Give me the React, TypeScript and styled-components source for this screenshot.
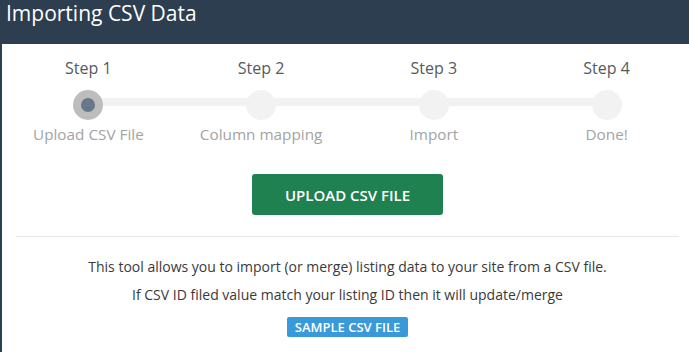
import React from "react";
import styled, { createGlobalStyle } from "styled-components";

const Global = createGlobalStyle`
  html, body { margin: 0; padding: 0; background: #ffffff; overflow: hidden; }
  body { font-family: "Open Sans", "Liberation Sans", sans-serif; }
`;

const Card = styled.div`
  width: 693px;
  height: 352px;
  background: #2c3e50;
  display: flex;
  flex-direction: column;
`;

const Header = styled.h1`
  margin: 0;
  height: 44px;
  padding: 1px 0 0 6px;
  box-sizing: border-box;
  color: #ffffff;
  font-family: "Open Sans", "Liberation Sans", sans-serif;
  font-weight: 400;
  font-size: 21px;
  line-height: 24px;
`;

const Body = styled.div`
  flex: 1;
  margin-left: 2px;
  background: #ffffff;
  padding-top: 12px;
  display: flex;
  flex-direction: column;
  align-items: center;
`;

const Stepper = styled.div`
  width: 100%;
  display: grid;
  grid-template-columns: repeat(4, 1fr);
`;

const Step = styled.div`
  display: flex;
  flex-direction: column;
  align-items: center;
`;

const StepTitle = styled.div`
  font-size: 16px;
  line-height: 24px;
  color: #555a60;
`;

const DotRow = styled.div<{ $last: boolean }>`
  position: relative;
  width: 100%;
  height: 30px;
  margin-top: 10px;
  display: flex;
  justify-content: center;
  &::before {
    content: "";
    display: ${(p) => (p.$last ? "none" : "block")};
    position: absolute;
    left: 50%;
    width: 100%;
    top: 8px;
    height: 8px;
    background: #f2f2f2;
  }
`;

const Dot = styled.div<{ $active: boolean }>`
  position: relative;
  z-index: 1;
  width: 30px;
  height: 30px;
  border-radius: 50%;
  background: ${(p) => (p.$active ? "#bdbdbd" : "#f2f2f2")};
  display: flex;
  align-items: center;
  justify-content: center;
`;

const DotCore = styled.div`
  width: 14px;
  height: 14px;
  border-radius: 50%;
  background: #67788a;
`;

const StepLabel = styled.div`
  margin-top: 4px;
  font-size: 15.3px;
  line-height: 20px;
  color: #a3a3a3;
`;

const UploadButton = styled.button`
  margin-top: 30px;
  width: 191px;
  height: 41px;
  border: none;
  border-radius: 3px;
  background: #1f8050;
  color: #ffffff;
  font-family: "Open Sans", "Liberation Sans", sans-serif;
  font-weight: 600;
  font-size: 15px;
  cursor: pointer;
`;

const Divider = styled.hr`
  align-self: stretch;
  margin: 21px 14px 0 14px;
  border: none;
  border-top: 1px solid #e8e8e8;
`;

const Note = styled.p<{ $gap: number }>`
  margin: ${(p) => p.$gap}px 0 0 0;
  font-size: 14px;
  line-height: 20px;
  color: #3a3a3a;
`;

const SampleButton = styled.button`
  margin-top: 12px;
  width: 121px;
  height: 20px;
  padding: 0;
  border: none;
  border-radius: 2px;
  background: #3a9ad9;
  color: #ffffff;
  font-family: "Open Sans", "Liberation Sans", sans-serif;
  font-weight: 600;
  font-size: 13px;
  line-height: 20px;
  cursor: pointer;
`;

const steps = [
  { title: "Step 1", label: "Upload CSV File" },
  { title: "Step 2", label: "Column mapping" },
  { title: "Step 3", label: "Import" },
  { title: "Step 4", label: "Done!" },
];

export default function App() {
  return (
    <>
      <Global />
      <Card>
        <Header>Importing CSV Data</Header>
        <Body>
          <Stepper>
            {steps.map((s, i) => (
              <Step key={s.title}>
                <StepTitle>{s.title}</StepTitle>
                <DotRow $last={i === steps.length - 1}>
                  <Dot $active={i === 0}>{i === 0 && <DotCore />}</Dot>
                </DotRow>
                <StepLabel>{s.label}</StepLabel>
              </Step>
            ))}
          </Stepper>
          <UploadButton>UPLOAD CSV FILE</UploadButton>
          <Divider />
          <Note $gap={20}>
            This tool allows you to import (or merge) listing data to your site from a CSV file.
          </Note>
          <Note $gap={8}>
            If CSV ID filed value match your listing ID then it will update/merge
          </Note>
          <SampleButton>SAMPLE CSV FILE</SampleButton>
        </Body>
      </Card>
    </>
  );
}
